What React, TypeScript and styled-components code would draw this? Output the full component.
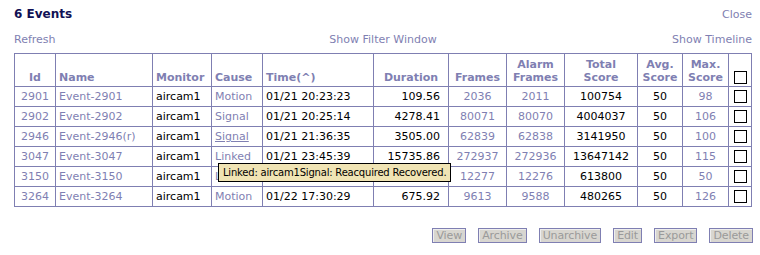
import * as React from 'react';
import styled, { createGlobalStyle } from 'styled-components';

const Global = createGlobalStyle`
    html, body {
        margin: 0;
        padding: 0;
        background: #ffffff;
    }
    body {
        font-family: 'DejaVu Sans', Verdana, sans-serif;
        font-size: 11px;
        color: #000000;
    }
`;

const Page = styled.div`
    width: 738px;
    padding: 4px 8px 0 14px;
    position: relative;
`;

const TitleBar = styled.div`
    display: flex;
    justify-content: space-between;
    align-items: center;
    height: 20px;
`;

const Title = styled.h2`
    margin: 0;
    font-size: 12px;
    font-weight: bold;
    color: #111155;
`;

const Link = styled.a<{ $hover?: boolean }>`
    color: #7f7fb2;
    text-decoration: ${p => (p.$hover ? 'underline' : 'none')};
    cursor: pointer;
`;

const Nav = styled.div`
    display: grid;
    grid-template-columns: 1fr 1fr 1fr;
    height: 16px;
    line-height: 16px;
    margin-top: 8px;
    margin-bottom: 5px;

    & > :nth-child(2) { text-align: center; }
    & > :nth-child(3) { text-align: right; }
`;

const Table = styled.table`
    border-collapse: collapse;
    table-layout: fixed;
    width: 738px;
    border: 1px solid #7f7fb2;
`;

const Head = styled.th<{ $align?: string }>`
    border: 1px solid #7f7fb2;
    height: 30px;
    padding: 0 3px 2px;
    vertical-align: bottom;
    text-align: ${p => p.$align || 'center'};
    color: #7f7fb2;
    font-weight: bold;
    line-height: 13px;
    white-space: nowrap;
    overflow: hidden;
`;

const Cell = styled.td<{ $align?: string; $pad?: number }>`
    border: 1px solid #7f7fb2;
    height: 19px;
    padding: 0 ${p => p.$pad ?? 3}px;
    text-align: ${p => p.$align || 'left'};
    white-space: nowrap;
    overflow: hidden;
    line-height: 19px;
`;

const Box = styled.input.attrs({ type: 'checkbox' })`
    appearance: none;
    display: block;
    width: 13px;
    height: 13px;
    margin: 0 auto;
    border: 1px solid #000;
    background: #fff;
    box-sizing: border-box;
`;

const Tip = styled.div`
    position: absolute;
    left: 218px;
    top: 163px;
    height: 17px;
    padding: 0 4px;
    line-height: 17px;
    font-size: 10px;
    letter-spacing: -0.2px;
    background: #f0e4b4;
    border: 1px solid #000;
    white-space: nowrap;
`;

const Actions = styled.div`
    display: flex;
    justify-content: flex-end;
    gap: 12px;
    margin-top: 21px;
    margin-right: -1px;
`;

const Btn = styled.button`
    font-family: 'DejaVu Sans', Verdana, sans-serif;
    font-size: 11px;
    height: 15px;
    line-height: 11px;
    padding: 0 3px;
    letter-spacing: -0.1px;
    color: #9a9a9a;
    background: #d8d6d0;
    border: 1px solid #7f7fb2;
    box-shadow: inset 1px 1px 0 #eeeeee;
`;

type Ev = {
    id: number;
    name: string;
    cause: string;
    time: string;
    dur: string;
    frames: number;
    alarm: number;
    total: number;
    max: number;
    hover?: boolean;
};

const events: Ev[] = [
    { id: 2901, name: 'Event-2901', cause: 'Motion', time: '01/21 20:23:23', dur: '109.56', frames: 2036, alarm: 2011, total: 100754, max: 98 },
    { id: 2902, name: 'Event-2902', cause: 'Signal', time: '01/21 20:25:14', dur: '4278.41', frames: 80071, alarm: 80070, total: 4004037, max: 106 },
    { id: 2946, name: 'Event-2946(r)', cause: 'Signal', time: '01/21 21:36:35', dur: '3505.00', frames: 62839, alarm: 62838, total: 3141950, max: 100, hover: true },
    { id: 3047, name: 'Event-3047', cause: 'Linked', time: '01/21 23:45:39', dur: '15735.86', frames: 272937, alarm: 272936, total: 13647142, max: 115 },
    { id: 3150, name: 'Event-3150', cause: 'Linked', time: '', dur: '', frames: 12277, alarm: 12276, total: 613800, max: 50 },
    { id: 3264, name: 'Event-3264', cause: 'Motion', time: '01/22 17:30:29', dur: '675.92', frames: 9613, alarm: 9588, total: 480265, max: 126 },
];

const widths = [41, 97, 59, 51, 111, 75, 58, 58, 73, 45, 46, 23];

const App = () => {
    return (
        <Page>
            <Global />
            <TitleBar>
                <Title>6 Events</Title>
                <Link>Close</Link>
            </TitleBar>
            <Nav>
                <Link>Refresh</Link>
                <Link>Show Filter Window</Link>
                <Link>Show Timeline</Link>
            </Nav>
            <Table>
                <colgroup>
                    {widths.map((w, i) => <col key={i} style={{ width: w }} />)}
                </colgroup>
                <thead>
                    <tr>
                        <Head>Id</Head>
                        <Head $align="left">Name</Head>
                        <Head $align="left">Monitor</Head>
                        <Head $align="left">Cause</Head>
                        <Head $align="left">Time(^)</Head>
                        <Head>Duration</Head>
                        <Head>Frames</Head>
                        <Head>Alarm<br />Frames</Head>
                        <Head>Total<br />Score</Head>
                        <Head>Avg.<br />Score</Head>
                        <Head>Max.<br />Score</Head>
                        <Head><Box /></Head>
                    </tr>
                </thead>
                <tbody>
                    {events.map(e => (
                        <tr key={e.id}>
                            <Cell $align="center"><Link>{e.id}</Link></Cell>
                            <Cell><Link>{e.name}</Link></Cell>
                            <Cell>aircam1</Cell>
                            <Cell><Link $hover={e.hover}>{e.cause}</Link></Cell>
                            <Cell>{e.time}</Cell>
                            <Cell $align="right" $pad={8}>{e.dur}</Cell>
                            <Cell $align="center"><Link>{e.frames}</Link></Cell>
                            <Cell $align="center"><Link>{e.alarm}</Link></Cell>
                            <Cell $align="center">{e.total}</Cell>
                            <Cell $align="center">50</Cell>
                            <Cell $align="center"><Link>{e.max}</Link></Cell>
                            <Cell $pad={0}><Box /></Cell>
                        </tr>
                    ))}
                </tbody>
            </Table>
            <Tip>Linked: aircam1Signal: Reacquired Recovered.</Tip>
            <Actions>
                <Btn disabled>View</Btn>
                <Btn disabled>Archive</Btn>
                <Btn disabled>Unarchive</Btn>
                <Btn disabled>Edit</Btn>
                <Btn disabled>Export</Btn>
                <Btn disabled>Delete</Btn>
            </Actions>
        </Page>
    );
};

export default App;
